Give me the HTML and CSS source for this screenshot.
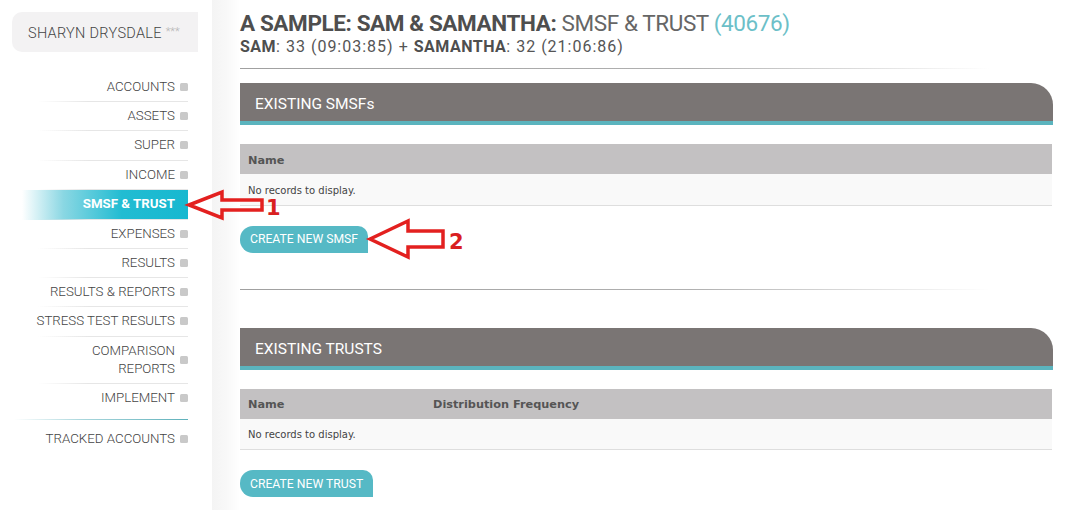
FILE: index.html
```html
<!DOCTYPE html>
<html>
<head>
<meta charset="utf-8">
<link rel="stylesheet" href="styles.css">
</head>
<body>
<div class="page">
  <aside class="sidebar">
    <div class="user">SHARYN DRYSDALE <span class="stars">***</span></div>
    <nav class="nav">
      <div class="item"><span>ACCOUNTS</span><i class="sq"></i></div>
      <div class="item"><span>ASSETS</span><i class="sq"></i></div>
      <div class="item"><span>SUPER</span><i class="sq"></i></div>
      <div class="item"><span>INCOME</span><i class="sq"></i></div>
      <div class="item active"><span>SMSF &amp; TRUST</span></div>
      <div class="item"><span>EXPENSES</span><i class="sq"></i></div>
      <div class="item"><span>RESULTS</span><i class="sq"></i></div>
      <div class="item"><span>RESULTS &amp; REPORTS</span><i class="sq"></i></div>
      <div class="item"><span>STRESS TEST RESULTS</span><i class="sq"></i></div>
      <div class="item"><span>COMPARISON<br>REPORTS</span><i class="sq"></i></div>
      <div class="item last"><span>IMPLEMENT</span><i class="sq"></i></div>
      <div class="teal-sep"></div>
      <div class="item last"><span>TRACKED ACCOUNTS</span><i class="sq"></i></div>
    </nav>
  </aside>
  <div class="shade"></div>
  <main class="main">
    <h1 class="title"><b>A SAMPLE: SAM &amp; SAMANTHA:</b> SMSF &amp; TRUST <span class="num">(40676)</span></h1>
    <div class="subtitle"><b>SAM</b>: 33 (09:03:85) + <b>SAMANTHA</b>: 32 (21:06:86)</div>
    <div class="hr hr1"></div>

    <section class="panel">
      <div class="panel-head">EXISTING SMSFs</div>
      <table class="grid">
        <thead><tr><th>Name</th></tr></thead>
        <tbody><tr><td>No records to display.</td></tr></tbody>
      </table>
      <button class="btn">CREATE NEW SMSF</button>
    </section>

    <div class="hr hr2"></div>

    <section class="panel">
      <div class="panel-head">EXISTING TRUSTS</div>
      <table class="grid">
        <thead><tr><th class="c1">Name</th><th>Distribution Frequency</th></tr></thead>
        <tbody><tr><td colspan="2">No records to display.</td></tr></tbody>
      </table>
      <button class="btn">CREATE NEW TRUST</button>
    </section>
  </main>

  <svg class="annot" width="1078" height="510" viewBox="0 0 1078 510">
    <path d="M189 205 L222 192 L222 200 L262 200 L262 210 L222 210 L222 218 Z" fill="none" stroke="#e3201f" stroke-width="3.5" stroke-linejoin="miter"/>
    <path d="M370 239 L408 221 L408 231 L443 231 L443 247 L408 247 L408 257 Z" fill="none" stroke="#e3201f" stroke-width="3.5" stroke-linejoin="miter"/>
    <text x="266" y="215" class="anum">1</text>
    <text x="449" y="249" class="anum">2</text>
  </svg>
</div>
</body>
</html>
```

FILE: styles.css
```css
* { box-sizing: border-box; }
html, body { margin: 0; padding: 0; background: #fff; }
body { font-family: Roboto, "Liberation Sans", sans-serif; color: #555; }

.page {
  position: relative;
  display: flex;
  width: 1078px;
  height: 510px;
  overflow: hidden;
}

.sidebar {
  width: 212px;
  flex: none;
  padding: 12px 24px 0 0;
}

.user {
  margin-left: 12px;
  margin-right: -10px;
  height: 40px;
  line-height: 40px;
  background: #f3f2f3;
  border-radius: 10px 0 0 10px;
  padding-left: 16px;
  font-size: 14.5px;
  font-weight: 300;
  color: #444;
  letter-spacing: 0.3px;
}
.user .stars { color: #b5b5b5; font-size: 11px; vertical-align: 3px; letter-spacing: 0; }

.nav {
  margin-top: 21px;
  margin-left: 22px;
}
.item {
  display: flex;
  justify-content: flex-end;
  align-items: center;
  padding: 5.1px 0;
  line-height: 18px;
  font-size: 13.3px;
  font-weight: 300;
  color: #444;
  text-align: right;
  border-bottom: 1px solid transparent;
  border-image: linear-gradient(to right, rgba(230,230,230,0) 10%, #e6e6e6 40%, #e6e6e6) 1;
}
.item.last { border-bottom-color: transparent; border-image: none; }
.item span { display: block; }
.sq {
  display: block;
  width: 8px;
  height: 8px;
  margin-left: 5px;
  background: #c9c9c9;
  border-radius: 1.5px;
}
.item.active {
  background: linear-gradient(to right, #ffffff 0%, #8ad7e3 25%, #22bcd2 60%, #17b8d0 100%);
  color: #fff;
  font-weight: 700;
  padding-right: 13px;
  height: 30px;
}
.teal-sep {
  height: 1px;
  margin: 6px 0 5px -8px;
  background: linear-gradient(to right, rgba(91,180,190,0) 0%, #a8d6dc 40%, #5fb1bb 100%);
}

.shade {
  width: 28px;
  flex: none;
  background: linear-gradient(to right, #f4f4f4 0%, #f8f8f8 50%, #ffffff 100%);
}

.main {
  width: 813px;
  flex: none;
  padding-top: 10px;
}

.title {
  margin: 0;
  font-size: 22.5px;
  line-height: 26px;
  font-weight: 400;
  color: #666;
  letter-spacing: -0.4px;
}
.title b { color: #4e4e4e; font-weight: 700; }
.title .num { color: #6cbfc8; }

.subtitle {
  font-size: 16px;
  line-height: 19px;
  color: #555;
  letter-spacing: 1px;
  margin-top: 1px;
}
.subtitle b { color: #4e4e4e; letter-spacing: 0.5px; }

.hr {
  height: 1px;
  width: 750px;
  background: linear-gradient(to right, #a0a0a0 0%, #b0b0b0 60%, rgba(200,200,200,0) 100%);
}
.hr1 { margin-top: 12px; margin-bottom: 14px; }
.hr2 { margin-top: 36px; margin-bottom: 38px; }

.panel-head {
  height: 42px;
  background: #7a7574;
  border-bottom: 4px solid #5bb4be;
  border-radius: 0 22px 0 0;
  color: #fff;
  font-size: 15.5px;
  line-height: 42px;
  padding-left: 15px;
}

.grid {
  width: 812px;
  margin-top: 19px;
  border-collapse: collapse;
  font-family: "DejaVu Sans", Verdana, sans-serif;
}
.grid th {
  height: 30px;
  background: #c3c1c2;
  color: #555;
  text-align: left;
  font-weight: 700;
  font-size: 11.3px;
  padding: 2px 8px 0;
}
.grid th.c1 { width: 185px; }
.grid td {
  height: 31px;
  background: #f9f9f9;
  border-bottom: 1px solid #dedede;
  color: #444;
  font-size: 10px;
  padding: 2px 8px 0;
}

.btn {
  display: block;
  margin-top: 20px;
  height: 27px;
  padding: 0 10px;
  border: 0;
  background: #56b9c5;
  color: #fff;
  font-family: Roboto, "Liberation Sans", sans-serif;
  font-size: 12.2px;
  border-radius: 13px 10px 0 13px;
}

.annot {
  position: absolute;
  left: 0;
  top: 0;
  pointer-events: none;
}
.anum {
  font-family: "DejaVu Sans", sans-serif;
  font-weight: 700;
  font-size: 21px;
  fill: #d9201f;
}
```
